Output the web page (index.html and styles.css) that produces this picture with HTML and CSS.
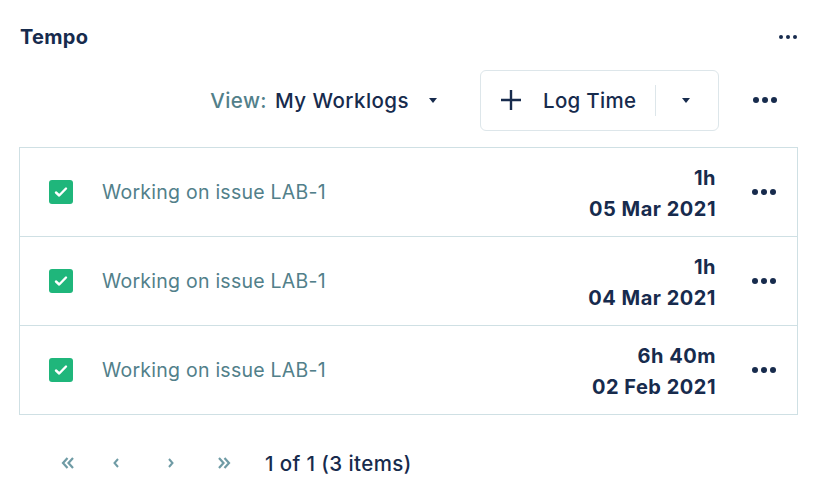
FILE: index.html
```html
<!DOCTYPE html>
<html>
<head>
<meta charset="utf-8">
<link rel="stylesheet" href="styles.css">
</head>
<body>
<div class="panel">
  <div class="header">
    <div class="title">Tempo</div>
    <div class="dots-small"><span></span><span></span><span></span></div>
  </div>
  <div class="toolbar">
    <div class="view">
      <span class="view-label">View:</span>
      <span class="view-value">My Worklogs</span>
      <span class="caret"></span>
    </div>
    <div class="logbtn">
      <div class="log-main">
        <svg class="plus" width="22" height="22" viewBox="0 0 22 22"><path d="M11 1v20M1 11h20" stroke="#172B4D" stroke-width="2.4" fill="none"/></svg>
        <span>Log Time</span>
      </div>
      <div class="divider"></div>
      <div class="log-caret"><span class="caret"></span></div>
    </div>
    <div class="dots"><span></span><span></span><span></span></div>
  </div>
  <div class="list">
    <div class="row">
      <div class="check"><svg width="14" height="12" viewBox="0 0 14 12"><path d="M2 6.5l3.2 3L12 2.5" stroke="#fff" stroke-width="2.4" fill="none" stroke-linecap="round" stroke-linejoin="round"/></svg></div>
      <div class="desc">Working on issue LAB-1</div>
      <div class="meta"><div>1h</div><div>05 Mar 2021</div></div>
      <div class="dots"><span></span><span></span><span></span></div>
    </div>
    <div class="row">
      <div class="check"><svg width="14" height="12" viewBox="0 0 14 12"><path d="M2 6.5l3.2 3L12 2.5" stroke="#fff" stroke-width="2.4" fill="none" stroke-linecap="round" stroke-linejoin="round"/></svg></div>
      <div class="desc">Working on issue LAB-1</div>
      <div class="meta"><div>1h</div><div>04 Mar 2021</div></div>
      <div class="dots"><span></span><span></span><span></span></div>
    </div>
    <div class="row">
      <div class="check"><svg width="14" height="12" viewBox="0 0 14 12"><path d="M2 6.5l3.2 3L12 2.5" stroke="#fff" stroke-width="2.4" fill="none" stroke-linecap="round" stroke-linejoin="round"/></svg></div>
      <div class="desc">Working on issue LAB-1</div>
      <div class="meta"><div>6h 40m</div><div>02 Feb 2021</div></div>
      <div class="dots"><span></span><span></span><span></span></div>
    </div>
  </div>
  <div class="pager">
    <svg class="pg first" width="14" height="12" viewBox="0 0 14 12"><path d="M6.5 1L2 6l4.5 5M12 1L7.5 6l4.5 5" stroke="#6F9BA5" stroke-width="2.2" fill="none"/></svg>
    <svg class="pg prev" width="8" height="12" viewBox="0 0 8 12"><path d="M6 2L2.5 6L6 10" stroke="#6F9BA5" stroke-width="2" fill="none"/></svg>
    <svg class="pg next" width="8" height="12" viewBox="0 0 8 12"><path d="M2 2l3.5 4L2 10" stroke="#6F9BA5" stroke-width="2" fill="none"/></svg>
    <svg class="pg last" width="14" height="12" viewBox="0 0 14 12"><path d="M2 1l4.5 5L2 11M7.5 1L12 6l-4.5 5" stroke="#6F9BA5" stroke-width="2.2" fill="none"/></svg>
    <span class="count">1 of 1 (3 items)</span>
  </div>
</div>
</body>
</html>
```
FILE: styles.css
```css
html, body {
  margin: 0;
  padding: 0;
  background: #fff;
}
body {
  font-family: "Inter", "Liberation Sans", sans-serif;
  color: #172B4D;
}
.panel {
  width: 821px;
  height: 500px;
  padding: 0 24px 0 19px;
  box-sizing: border-box;
}
.header {
  display: flex;
  justify-content: space-between;
  align-items: center;
  height: 37px;
  padding-top: 18px;
  padding-left: 1px;
}
.title {
  font-size: 20px;
  font-weight: 700;
  letter-spacing: 0.3px;
}
.dots-small {
  display: flex;
  gap: 3px;
}
.dots-small span {
  width: 4px;
  height: 4px;
  border-radius: 50%;
  background: #172B4D;
}
.toolbar {
  display: flex;
  justify-content: flex-end;
  align-items: center;
  height: 60px;
  margin-top: 15px;
}
.view {
  display: flex;
  align-items: center;
  font-size: 20.5px;
  font-weight: 500;
  letter-spacing: 0.45px;
}
.view-label {
  color: #52808A;
  margin-right: 8px;
}
.view-value {
  color: #172B4D;
}
.caret {
  display: inline-block;
  width: 0;
  height: 0;
  border-left: 4.5px solid transparent;
  border-right: 4.5px solid transparent;
  border-top: 5px solid #172B4D;
}
.view .caret {
  margin-left: 20px;
}
.logbtn {
  display: flex;
  align-items: center;
  margin-left: 43px;
  width: 239px;
  height: 61px;
  box-sizing: border-box;
  border: 1.5px solid #DDE6EA;
  border-radius: 6px;
}
.log-main {
  display: flex;
  align-items: center;
  padding-left: 19px;
  font-size: 20.5px;
  font-weight: 500;
  letter-spacing: 0.3px;
}
.plus {
  margin-right: 21px;
}
.divider {
  width: 1px;
  height: 31px;
  background: #DDE6EA;
  margin-left: 19px;
}
.log-caret {
  display: flex;
  padding-left: 26px;
}
.toolbar .dots {
  margin-left: 34px;
  margin-right: 20px;
}
.dots {
  display: flex;
  gap: 3px;
}
.dots span {
  width: 6px;
  height: 6px;
  border-radius: 50%;
  background: #172B4D;
}
.list {
  margin-top: 17px;
  border: 1.5px solid #CFE0E4;
  width: 779px;
  box-sizing: border-box;
}
.row {
  display: flex;
  align-items: center;
  height: 89px;
  box-sizing: border-box;
  border-top: 1.5px solid #CFE0E4;
}
.row:first-child {
  border-top: none;
  height: 88px;
}
.check {
  width: 24px;
  height: 24px;
  margin-left: 29px;
  border-radius: 3px;
  background: #1FB67B;
  display: flex;
  align-items: center;
  justify-content: center;
}
.desc {
  margin-left: 29px;
  flex: 1;
  font-size: 19.5px;
  letter-spacing: 0.25px;
  color: #52808A;
}
.meta {
  text-align: right;
  font-size: 20px;
  font-weight: 700;
  letter-spacing: 0.5px;
  line-height: 31px;
  padding-top: 3px;
}
.row .dots {
  margin-left: 36px;
  margin-right: 21px;
}
.pager {
  display: flex;
  align-items: center;
  height: 30px;
  margin-top: 33px;
  padding-left: 42px;
}
.pg.first { margin-right: 37px; }
.pg.prev { margin-right: 47px; }
.pg.next { margin-right: 42px; }
.pg.last { margin-right: 34px; }
.count {
  font-size: 20.5px;
  font-weight: 500;
  letter-spacing: 0.4px;
  color: #172B4D;
}
```
